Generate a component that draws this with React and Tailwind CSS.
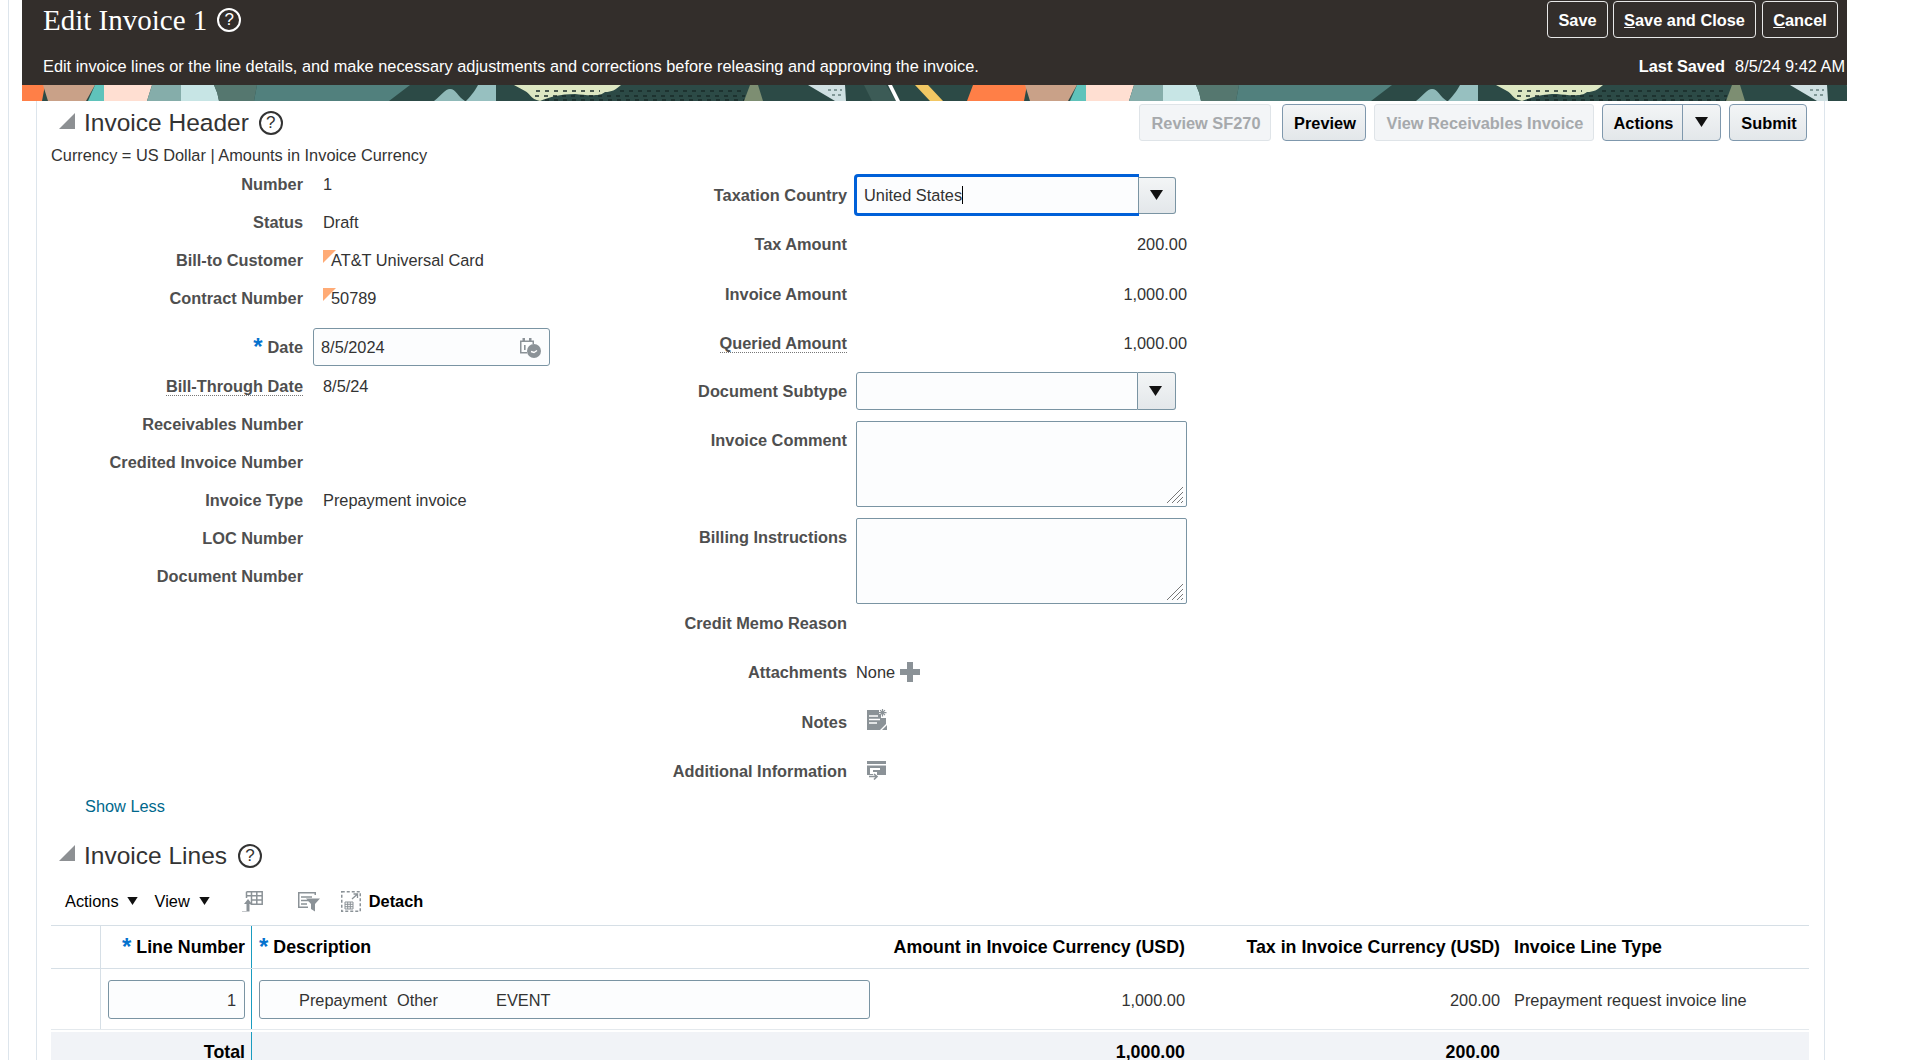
import React from "react";

const Help = ({ className = "" }) => (
  <span className={`flex items-center justify-center rounded-full border-2 w-[24px] h-[24px] text-[17px] leading-none font-normal shrink-0 ${className}`}>?</span>
);

const Tile = ({ x }) => (
  <g transform={`translate(${x} 0)`}>
    <path d="M-9 0H45L42 16H-15Z" fill="#ff7f47" />
    <path d="M43 0H95L86 16H48Z" fill="#c9a188" />
    <path d="M95 0H104V16H88Z" fill="#5fc3bb" />
    <path d="M104 0H152L147 16H104Z" fill="#ffdfd2" />
    <path d="M152 0H181V16H147Z" fill="#85adaa" />
    <path d="M181 0H214Q218 8 219 16H181Z" fill="#c7e5e5" />
    <path d="M214 0H257L254 16H219Q218 8 214 0Z" fill="#55776f" />
    <path d="M257 0H410L389 16H254Z" fill="#51807d" />
    <path d="M434 16C442 10 445 4 450 4C456 4 458 12 465 16Z" fill="#8fb9b8" />
    <path d="M466 16C472 10 476 4 478 0H496V16Z" fill="#97c0c0" />
    <path d="M514 0H621C615 5 612 7 605 7C600 12 585 10 575 9C560 9 550 12 540 16C530 14 530 8 525 6Z" fill="#dde7c2" />
    <path d="M536 6H600M535 11H745M545 15H745M620 6H745" stroke="#182b28" strokeWidth="1.4" strokeDasharray="4 5" fill="none" />
    <path d="M750 0H758L763 16H744Z" fill="#7d8e72" />
    <path d="M808 0H845L846 16H835Z" fill="#cfe0e2" />
    <path d="M828 5H842M832 10H844" stroke="#33504c" strokeWidth="1.2" strokeDasharray="3 3" fill="none" />
    <path d="M864 0H886L896 16H872Z" fill="#3c5b56" />
    <path d="M888 0H892L900 16H896Z" fill="#ffffff" />
    <path d="M915 0H928L943 16H930Z" fill="#f2c763" />
  </g>
);

const Banner = () => (
  <svg className="block w-full h-[16px]" viewBox="22 0 1825 16" preserveAspectRatio="none">
    <rect x="22" y="0" width="1825" height="16" fill="#2c4a46" />
    <Tile x={0} />
    <Tile x={982} />
  </svg>
);

const Triangle = ({ className = "" }) => (
  <svg width="16" height="16" viewBox="0 0 16 16" className={`shrink-0 ${className}`}><path d="M16 0V16H0Z" fill="#8d9093" /></svg>
);

const Caret = ({ className = "", small }) => (
  <svg width={small ? 11 : 13} height={small ? 8 : 10} viewBox="0 0 13 10" className={className}><path d="M0 0H13L6.5 10Z" fill="#111" /></svg>
);

const Star = () => <span className="text-[#0572ce] text-[24px] leading-[0] font-bold mr-[5px]">*</span>;

const Flag = () => (
  <svg width="13" height="13" viewBox="0 0 13 13" className="absolute left-0 top-0"><path d="M0 0H13L0 13Z" fill="#ffab76" /></svg>
);

const CalIcon = () => (
  <svg width="22" height="21" viewBox="0 0 22 21">
    <path d="M1 3.5H15V7H13.5V5H2.5V15H8V16.5H1Z" fill="#8b9297" />
    <rect x="3.5" y="1" width="2.5" height="3" fill="#8b9297" /><rect x="10" y="1" width="2.5" height="3" fill="#8b9297" />
    <rect x="5" y="8" width="1.6" height="5" fill="#8b9297" />
    <circle cx="15" cy="14" r="7" fill="#8b9297" />
    <path d="M12 14.5L15 15.5L18 13.5" stroke="#fff" strokeWidth="1.4" fill="none" />
  </svg>
);

const PlusIcon = () => (
  <svg width="20" height="20" viewBox="0 0 20 20"><path d="M7 0H13V7H20V13H13V20H7V13H0V7H7Z" fill="#8b9297" /></svg>
);

const NotesIcon = () => (
  <svg width="20" height="21" viewBox="0 0 20 21">
    <path d="M0 1H12V5H14L14 9H19V15L13 21H0Z" fill="#8b9297" />
    <path d="M2 7H11M2 10.5H13M2 14H10" stroke="#fff" strokeWidth="1.3" />
    <path d="M15.5 0V7.5M12 3.7H19.5M13 1.2L18 6.2M18 1.2L13 6.2" stroke="#8b9297" strokeWidth="1.2" />
    <path d="M15 21L20 16V21Z" fill="#8b9297" />
  </svg>
);

const InfoIcon = () => (
  <svg width="19" height="19" viewBox="0 0 19 19">
    <rect x="0" y="0" width="19" height="3" fill="#8b9297" />
    <path d="M0 4.5H19V14H10V11H6V9H13V7H3V13H6V14H0Z" fill="#8b9297" />
    <path d="M2 15.5H9M7 13L10 15.5L7 18.5" stroke="#8b9297" strokeWidth="1.6" fill="none" />
  </svg>
);

const FreezeIcon = () => (
  <svg width="21" height="21" viewBox="0 0 21 21">
    <path d="M4.5 .8H20.2V13.2H8.5M4.5 .8V7M9.5 .8V13M14.8 .8V13M4.5 4.8H20M9 9H20" stroke="#8b9297" strokeWidth="1.5" fill="none" />
    <path d="M0 20H4.5V13H2L6 8L10 13H7.5V20.5H0Z" fill="#8b9297" />
  </svg>
);

const FilterIcon = () => (
  <svg width="22" height="21" viewBox="0 0 22 21">
    <path d="M0 1H18V4H16.5V2.5H1.5V15.5H10V17H0Z" fill="#8b9297" />
    <path d="M3 6H14M3 9.5H11M3 13H9" stroke="#8b9297" strokeWidth="1.6" />
    <path d="M8 7.5H22L17 13V20.5L13 18V13Z" fill="#8b9297" />
  </svg>
);

const DetachIcon = () => (
  <svg width="20" height="21" viewBox="0 0 20 21">
    <rect x=".75" y=".75" width="18.5" height="19.5" fill="none" stroke="#8b9297" strokeWidth="1.5" strokeDasharray="3 2" />
    <path d="M4 11H12V18H4ZM4 13.3H12M4 15.7H12M6.7 11V18M9.3 11V18" stroke="#8b9297" strokeWidth="1" fill="none" />
    <path d="M11 8L16 3.5M12.5 3H16.5V7" stroke="#8b9297" strokeWidth="1.3" fill="none" />
  </svg>
);

const TopBtn = ({ children, w }) => (
  <button className={`h-[37px] ${w} rounded-[4px] border border-[#e8e8e8] text-white font-bold text-[16.35px] pt-px flex items-center justify-center`}>{children}</button>
);

const DisBtn = ({ children, w }) => (
  <button className={`h-[37px] ${w} rounded-[3px] border border-[#dfe4e8] bg-[#f3f5f7] text-[#a6a9ac] font-bold text-[16.35px] pt-px pl-[2px]`}>{children}</button>
);
const Btn = ({ children, w }) => (
  <button className={`h-[37px] ${w} rounded-[4px] border border-[#7f98ad] bg-gradient-to-b from-[#f3f5f6] to-[#e3e7ea] text-black font-bold text-[16.35px] pt-px pl-[2px]`}>{children}</button>
);

const Label = ({ children, className = "" }) => (
  <span className={`font-bold text-[#4f4f4f] ${className}`}>{children}</span>
);

const LRow = ({ label, value, flag, dotted }) => (
  <div className="flex items-center h-[38px]">
    <div className="w-[266px] text-right shrink-0">
      <Label className={dotted ? "border-b border-dotted border-[#777]" : ""}>{label}</Label>
    </div>
    <div className={`relative ml-[20px] ${flag ? "pl-[8px]" : ""} text-[#333]`}>
      {flag && <Flag />}
      {value}
    </div>
  </div>
);

const RLabel = ({ children, dotted, className = "" }) => (
  <div className={`w-[247px] text-right shrink-0 ${className}`}>
    <Label className={dotted ? "border-b border-dotted border-[#777]" : ""}>{children}</Label>
  </div>
);

const RAmount = ({ label, value, dotted, h = "h-[50px]" }) => (
  <div className={`flex items-center ${h}`}>
    <RLabel dotted={dotted}>{label}</RLabel>
    <div className="w-[331px] ml-[9px] text-right text-[#333]">{value}</div>
  </div>
);

const RIcon = ({ label, children, className = "" }) => (
  <div className={`flex items-center h-[40px] ${className}`}>
    <RLabel>{label}</RLabel>
    <div className="ml-[10px] flex items-center text-[#333]">{children}</div>
  </div>
);

const Grip = () => (
  <svg width="18" height="18" viewBox="0 0 18 18" className="absolute right-[2px] bottom-[2px]">
    <path d="M1 17L17 1M6 17L17 6M11 17L17 11M15 17L17 15" stroke="#777" strokeWidth="1" fill="none" />
  </svg>
);

const TextArea = ({ label, className = "" }) => (
  <div className={`flex items-start ${className}`}>
    <RLabel className="pt-[9px]">{label}</RLabel>
    <div className="relative ml-[9px] w-[331px] h-[86px] rounded-[2px] border border-[#7a94a3] bg-[#fcfdfe]"><Grip /></div>
  </div>
);

const Select = ({ children, h, className = "" }) => (
  <div className={`flex ${h} items-stretch ${className}`}>
    <div className="w-[282px] rounded-l-[3px] border border-[#7a94a3] bg-[#fcfdfe] flex items-center pl-[7px] text-[#333]">{children}</div>
    <div className="w-[38px] rounded-r-[3px] border border-l-0 border-[#7a94a3] bg-gradient-to-b from-[#f3f5f6] to-[#e3e7ea] flex items-center justify-center pr-[2px]"><Caret /></div>
  </div>
);

const gridCols = "grid grid-cols-[49px_151px_626px_314px_315px_303px]";
const headSize = "text-[17.8px]";

export default function App() {
  return (
    <div className="w-[1919px] h-[1060px] overflow-hidden bg-white pl-[8px] text-[16.35px] leading-[20px] text-[#333]" style={{ fontFamily: '"Liberation Sans", Arial, sans-serif' }}>
      <div className="h-full w-[1840px] border-l border-[#dde5ec] pl-[13px]">
        <div className="w-[1825px]">
          <div className="h-[85px] bg-[#332e2b] text-white flex flex-col">
            <div className="flex justify-between pt-[1px] pl-[21px] pr-[9px]">
              <div className="flex items-center h-[38px] gap-[10px]">
                <h1 className="text-[29px] leading-[38px]" style={{ fontFamily: '"Liberation Serif", serif' }}>Edit Invoice 1</h1>
                <Help className="border-white -mt-[1px]" />
              </div>
              <div className="flex gap-[5px]">
                <TopBtn w="w-[61px]">Save</TopBtn>
                <TopBtn w="w-[143px]"><span><u>S</u>ave and Close</span></TopBtn>
                <TopBtn w="w-[76px] ml-[1px]"><span><u>C</u>ancel</span></TopBtn>
              </div>
            </div>
            <div className="flex justify-between items-center mt-[17px] pl-[21px] pr-[2px]">
              <span>Edit invoice lines or the line details, and make necessary adjustments and corrections before releasing and approving the invoice.</span>
              <span><b>Last Saved</b><span className="ml-[10px]">8/5/24 9:42 AM</span></span>
            </div>
          </div>
          <Banner />
          <div className="ml-[14px] w-[1789px] h-[959px] border-x border-[#dde5ec]">
            <div className="flex justify-between pt-[3px] pr-[17px]">
              <div className="flex items-center h-[37px] pl-[22px]">
                <Triangle className="-mt-[3px]" />
                <span className="ml-[9px] text-[24.5px] text-[#333]">Invoice Header</span>
                <Help className="ml-[10px] border-[#333] text-[#333]" />
              </div>
              <div className="flex">
                <DisBtn w="w-[132px]">Review SF270</DisBtn>
                <Btn w="w-[84px] ml-[11px]">Preview</Btn>
                <DisBtn w="w-[220px] ml-[8px]">View Receivables Invoice</DisBtn>
                <div className="flex ml-[8px] h-[37px] w-[119px] rounded-[4px] border border-[#7f98ad] bg-gradient-to-b from-[#f3f5f6] to-[#e3e7ea] text-black font-bold">
                  <span className="w-[80px] border-r border-[#7f98ad] flex items-center justify-center pt-px pl-[2px]">Actions</span>
                  <span className="flex-1 flex items-center justify-center"><Caret className="-mt-[2px]" /></span>
                </div>
                <Btn w="w-[78px] ml-[8px]">Submit</Btn>
              </div>
            </div>
            <div className="mt-[4px] h-[20px] pl-[14px]">Currency = US Dollar | Amounts in Invoice Currency</div>
            <div className="flex h-[630px]">
              <div className="w-[563px] shrink-0">
                <LRow label="Number" value="1" />
                <LRow label="Status" value="Draft" />
                <LRow label="Bill-to Customer" value="AT&T Universal Card" flag />
                <LRow label="Contract Number" value="50789" flag />
                <div className="flex items-center mt-[11px] h-[38px]">
                  <div className="w-[266px] shrink-0 flex items-center justify-end"><Star /><Label>Date</Label></div>
                  <div className="ml-[10px] w-[237px] h-[38px] rounded-[3px] border border-[#7a94a3] bg-[#fcfdfe] flex items-center justify-between pl-[7px] pr-[8px]">
                    <span>8/5/2024</span><CalIcon />
                  </div>
                </div>
                <div className="h-[1px]" />
                <LRow label="Bill-Through Date" value="8/5/24" dotted />
                <LRow label="Receivables Number" value="" />
                <LRow label="Credited Invoice Number" value="" />
                <LRow label="Invoice Type" value="Prepayment invoice" />
                <LRow label="LOC Number" value="" />
                <LRow label="Document Number" value="" />
              </div>
              <div className="pt-[9px]">
                <div className="flex items-center h-[42px]">
                  <RLabel>Taxation Country</RLabel>
                  <div className="ml-[7px] flex items-center">
                    <div className="w-[285px] h-[42px] rounded-l-[4px] border-[3px] border-[#0060d8] border-r-0 bg-[#fcfdfe] flex items-center pl-[7px] relative">
                      <span>United States</span><span className="w-px h-[18px] bg-black" />
                      <span className="absolute right-0 top-0 bottom-0 w-px bg-[#7a94a3]" />
                    </div>
                    <div className="w-[37px] h-[37px] rounded-r-[3px] border border-l-0 border-[#7a94a3] bg-gradient-to-b from-[#f3f5f6] to-[#e3e7ea] flex items-center justify-center pr-[2px]"><Caret /></div>
                  </div>
                </div>
                <div className="mt-[3px]">
                  <RAmount label="Tax Amount" value="200.00" />
                  <RAmount label="Invoice Amount" value="1,000.00" h="h-[49px]" />
                  <RAmount label="Queried Amount" value="1,000.00" dotted h="h-[49px]" />
                </div>
                <div className="flex items-center mt-[5px]">
                  <RLabel>Document Subtype</RLabel>
                  <Select h="h-[38px]" className="ml-[9px]" />
                </div>
                <TextArea label="Invoice Comment" className="mt-[11px]" />
                <TextArea label="Billing Instructions" className="mt-[11px]" />
                <div className="flex items-center h-[38px]"><RLabel>Credit Memo Reason</RLabel></div>
                <RIcon label="Attachments" className="mt-[10px]"><span className="-ml-[1px]">None</span><span className="ml-[5px]"><PlusIcon /></span></RIcon>
                <RIcon label="Notes" className="mt-[10px]"><span className="ml-[10px] -mt-[5px]"><NotesIcon /></span></RIcon>
                <RIcon label="Additional Information" className="mt-[9px]"><span className="ml-[10px] -mt-[2px]"><InfoIcon /></span></RIcon>
              </div>
            </div>
            <div className="h-[22px] pl-[48px] text-[#00688c] leading-[22px]">Show Less</div>
            <div className="mt-[26px] flex items-center h-[25px] pl-[22px]">
              <Triangle className="-mt-[5px]" />
              <span className="ml-[9px] text-[24.5px] text-[#333]">Invoice Lines</span>
              <Help className="ml-[11px] border-[#333] text-[#333]" />
            </div>
            <div className="mt-[19px] h-[28px] flex items-center pl-[28px] text-black">
              <span>Actions</span><Caret small className="ml-[8px]" />
              <span className="ml-[17px]">View</span><Caret small className="ml-[9px]" />
              <span className="ml-[32px]"><FreezeIcon /></span>
              <span className="ml-[35px]"><FilterIcon /></span>
              <span className="ml-[21px]"><DetachIcon /></span>
              <b className="ml-[8px]">Detach</b>
            </div>
            <div className="mt-[10px] ml-[14px] w-[1758px]">
              <div className={`${gridCols} h-[44px] items-center border-y border-[#d6dfe6] font-bold text-black ${headSize}`}>
                <div className="h-full" />
                <div className="h-full border-l border-[#d6dfe6] flex items-center justify-end pr-[6px]"><Star /><span>Line Number</span></div>
                <div className="h-full border-l border-[#1a9cc0] flex items-center pl-[7px]"><Star /><span>Description</span></div>
                <div className="text-right pr-[6px] whitespace-nowrap">Amount in Invoice Currency (USD)</div>
                <div className="text-right pr-[6px] whitespace-nowrap">Tax in Invoice Currency (USD)</div>
                <div className="pl-[8px] whitespace-nowrap">Invoice Line Type</div>
              </div>
              <div className={`${gridCols} h-[61px] items-center border-b border-[#e4e9ed]`}>
                <div className="h-full" />
                <div className="h-full border-l border-[#d6dfe6] flex items-center justify-end pr-[6px]">
                  <div className="w-[137px] h-[39px] rounded-[3px] border border-[#7a94a3] bg-[#fcfdfe] flex items-center justify-end pr-[8px] pt-px">1</div>
                </div>
                <div className="h-full border-l border-[#1a9cc0] flex items-center pl-[7px]">
                  <div className="w-[611px] h-[39px] rounded-[3px] border border-[#7a94a3] bg-[#fcfdfe] flex items-center pl-[39px] pt-px">
                    <span className="w-[98px]">Prepayment</span><span className="w-[99px]">Other</span><span>EVENT</span>
                  </div>
                </div>
                <div className="text-right pr-[6px] pt-px">1,000.00</div>
                <div className="text-right pr-[6px] pt-px">200.00</div>
                <div className="pl-[8px] whitespace-nowrap pt-px">Prepayment request invoice line</div>
              </div>
              <div className={`${gridCols} mt-[2px] h-[29px] bg-[#f1f3f7] font-bold text-black leading-[16px] ${headSize}`}>
                <div className="h-full col-span-2 flex items-start justify-end pt-[12px] pr-[6px]">Total</div>
                <div className="h-full border-l border-[#1a9cc0]" />
                <div className="h-full text-right pt-[12px] pr-[6px]">1,000.00</div>
                <div className="h-full text-right pt-[12px] pr-[6px]">200.00</div>
                <div className="h-full" />
              </div>
            </div>
          </div>
        </div>
      </div>
    </div>
  );
}
